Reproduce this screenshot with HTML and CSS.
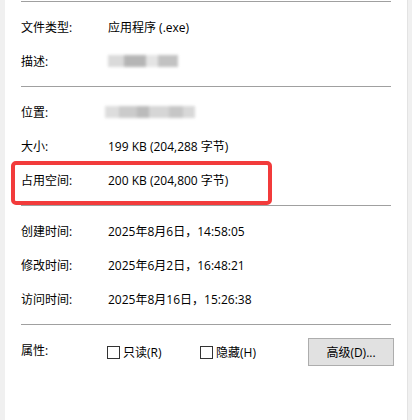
FILE: index.html
```html
<!DOCTYPE html>
<html lang="zh-CN">
<head>
    <meta charset="UTF-8">
    <title>属性</title>
    <link rel="stylesheet" href="styles.css">
</head>
<body>
    <div class="frame">
        <div class="edge"></div>
        <div class="panel">
            <div class="rule"></div>
            <div class="section">
                <div class="row"><span>文件类型:</span><span>应用程序 (.exe)</span></div>
                <div class="row"><span>描述:</span>
                    <span class="smudge short">
                        <i style="width: 16px; background: #d4d4d4"></i><i style="width: 22px; background: #a9a9a9"></i><i style="width: 12px; background: #e0e0e0"></i><i style="width: 20px; background: #b8b8b8"></i>
                    </span>
                </div>
            </div>
            <div class="rule"></div>
            <div class="section">
                <div class="row"><span>位置:</span>
                    <span class="smudge long">
                        <i style="width: 14px; background: #d8d8d8"></i><i style="width: 18px; background: #c2c2c2"></i><i style="width: 12px; background: #b0b0b0"></i><i style="width: 20px; background: #cfcfcf"></i><i style="width: 14px; background: #bdbdbd"></i><i style="width: 12px; background: #d2d2d2"></i>
                    </span>
                </div>
                <div class="row"><span>大小:</span><span>199 KB (204,288 字节)</span></div>
                <div class="row marked"><span>占用空间:</span><span>200 KB (204,800 字节)</span></div>
            </div>
            <div class="rule"></div>
            <div class="section">
                <div class="row"><span>创建时间:</span><span>2025年8月6日，14:58:05</span></div>
                <div class="row"><span>修改时间:</span><span>2025年6月2日，16:48:21</span></div>
                <div class="row"><span>访问时间:</span><span>2025年8月16日，15:26:38</span></div>
            </div>
            <div class="rule"></div>
            <div class="attrs">
                <span class="attrs-label">属性:</span>
                <label class="check readonly"><span class="box"></span>只读(R)</label>
                <label class="check"><span class="box"></span>隐藏(H)</label>
                <button class="advanced">高级(D)...</button>
            </div>
        </div>
        <div class="edge"></div>
    </div>
</body>
</html>
```

FILE: styles.css
```css
* {
    margin: 0;
    padding: 0;
    box-sizing: border-box;
}

body {
    font-family: "Open Sans", "Noto Sans CJK SC", sans-serif;
    font-size: 12px;
    color: #000;
    background: #f0f0f0;
    height: 420px;
    overflow: hidden;
}

.frame {
    display: flex;
    height: 420px;
}

.edge {
    width: 5px;
    background: #f0f0f0;
}

.edge:last-child {
    border-left: 1px solid #e3e3e3;
}

.panel {
    flex: 1;
    background: #fff;
    padding: 1px 16px 0 16px;
}

.rule {
    height: 1px;
    background: #a0a0a0;
}

.section {
    padding: 8px 0;
}

.row {
    position: relative;
    display: grid;
    grid-template-columns: 87px 1fr;
    align-items: center;
    height: 34px;
    white-space: nowrap;
}

.marked::before {
    content: "";
    position: absolute;
    left: -10px;
    top: -2px;
    width: 253px;
    height: 36px;
    border: 4px solid #f23b3b;
    border-radius: 5px;
}

.smudge {
    display: flex;
    height: 12px;
    filter: blur(1.6px);
    opacity: 0.85;
}

.smudge i {
    display: block;
    height: 100%;
}

.short {
    width: 70px;
}

.long {
    width: 90px;
    margin-left: -3px;
}

.attrs {
    display: flex;
    align-items: center;
    padding-top: 13px;
    white-space: nowrap;
}

.attrs-label {
    width: 86px;
    margin-top: -4px;
}

.check {
    display: flex;
    align-items: center;
    gap: 3px;
}

.readonly {
    width: 93px;
}

.box {
    width: 13px;
    height: 13px;
    border: 1px solid #333;
    background: #fff;
}

.advanced {
    margin-left: auto;
    margin-right: -3px;
    width: 86px;
    height: 28px;
    background: #e1e1e1;
    border: 1px solid #adadad;
    font-family: inherit;
    font-size: 12px;
    color: #000;
}
```
